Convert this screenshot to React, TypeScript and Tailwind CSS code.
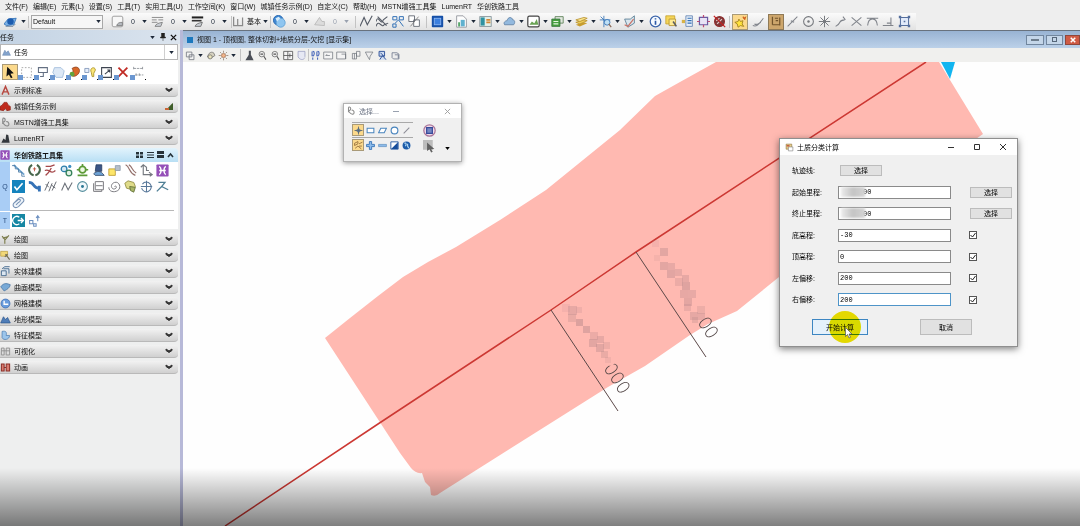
import React from "react";

const B = "#2f6fb5";
const D = "#555b66";

/* Every glyph is drawn on a 16 × 16 grid. */
const glyphs: Record<string, React.ReactNode> = {
  globe: (
    <>
      <path d="M0 11 5 5l10-1-3 8-9 1z" fill="#79b0e6" stroke={B} />
      <circle cx="8" cy="8" r="4" fill="#1d5cae" />
      <path d="M2 14h9l3-3" stroke="#6b7f94" fill="none" />
    </>
  ),
  sheet: (
    <>
      <rect x="1.5" y="1.5" width="13" height="13" rx="2" fill="#f7f7f7" stroke="#8c8c8c" />
      <path d="M7 13c1-3 3-4 7-4v4z" fill="#b5bac0" stroke="#777" />
    </>
  ),
  lines: (
    <>
      <path d="M1 3h14M1 6h6M9 6h6M1 9h7" stroke="#777" fill="none" />
      <path d="M5 14c1-3 4-4 9-5l-2 5z" fill="#c9ced4" stroke="#777" />
    </>
  ),
  weights: (
    <>
      <path d="M1 3h14" stroke="#222" strokeWidth="2.5" />
      <path d="M1 7h12" stroke="#333" strokeWidth="2" />
      <path d="M5 14c1-3 4-4 9-5l-2 5z" fill="#c9ced4" stroke="#666" />
    </>
  ),
  level: <path d="M2 2v11h5M7 5v8h6V3" stroke="#8a8a8a" fill="none" strokeWidth="1.5" />,
  sphere: (
    <>
      <circle cx="6.5" cy="6.5" r="6" fill="#3f87d3" stroke="#1f5fa8" />
      <circle cx="9.5" cy="9.5" r="5.5" fill="#8ec5f0" stroke="#5f9fd2" />
      <path d="m3 4 4-2 2 2-4 4z" fill="#d6ecfb" />
    </>
  ),
  faded: <path d="M2 12 8 3l3 5h3v5z" fill="#dcdcdc" stroke="#b5b5b5" />,
  zigzag: <path d="m0 14 5-11 4 9 6-11" stroke={D} fill="none" strokeWidth="1.4" />,
  waves: <path d="M0 8c3-10 6 7 9-2l5-4M0 14c3-10 7 3 10-2l5-2M2 2l11 11" stroke={D} fill="none" strokeWidth="1.3" />,
  snapgrid: <path d="M1 2h5v4H1zM9 2h5v4H9zM4 10l4-4 6 8M1 11h4v4H1z" stroke={B} fill="none" strokeWidth="1.2" />,
  rotbox: (
    <>
      <path d="M1 1h7v7H1zM7 6h7v8H7z" stroke={D} fill="#fff" />
      <path d="m3 14 10-12" stroke="#777" />
    </>
  ),
  bluebox: (
    <>
      <rect x="1" y="1" width="14" height="14" rx="1" fill="#1650a8" />
      <rect x="4" y="4" width="8" height="8" fill="#3b7fdf" stroke="#8fb9f5" />
    </>
  ),
  page: (
    <>
      <path d="M2 1h8l4 4v10H2z" fill="#fdfdfd" stroke="#8a8f96" />
      <path d="M7 6h5v8H7z" fill="#5fb1cf" />
      <path d="M5 9v5" stroke="#3f9a54" strokeWidth="2" />
    </>
  ),
  panel: (
    <>
      <rect x="1" y="2" width="14" height="12" fill="#e4f0e9" stroke="#7d8b93" />
      <path d="M2 3h5v10H2z" fill="#2f92a2" />
      <path d="M9 6h5M9 9h5" stroke="#d68836" strokeWidth="2" />
    </>
  ),
  cloud: <path d="M2 12c-2-3 1-5 3-5 1-5 6-5 7-1 3 0 3 4 1 6z" fill="#93b9de" stroke="#5e7fa3" />,
  photo: (
    <>
      <rect x="1" y="1.500" width="14" height="13" rx="2" fill="#fff" stroke="#444" strokeWidth="1.5" />
      <path d="m3 12 3-4 3 2 3-5 2 7z" fill="#6aa354" />
    </>
  ),
  greens: (
    <>
      <path d="M5 2h10v8H5z" fill="#e2e7df" stroke="#557b50" />
      <path d="M1 5h10v9H1z" fill="#47a03f" stroke="#35713a" />
      <path d="M3 8h6M3 11h6" stroke="#e5f5df" strokeWidth="1.5" />
    </>
  ),
  layers: (
    <>
      <path d="m1 12 10-3 4 1-9 4z" fill="#c99e2d" />
      <path d="m1 9 10-3 4 1-9 4z" fill="#efce58" stroke="#b9912c" />
      <path d="m1 6 10-3 4 1-9 4z" fill="#f9e58e" stroke="#b9912c" />
    </>
  ),
  target: (
    <>
      <path d="M6 1v14M1 6h13M2 2l8 8" stroke={B} />
      <circle cx="10" cy="9" r="3.500" fill="#bfe0f5" stroke={B} />
      <path d="m12 11 3 4" stroke="#8a6a58" strokeWidth="1.5" />
    </>
  ),
  chart: (
    <>
      <path d="M2 5h7l5-4v9l-8 5z" fill="#d9e6ee" stroke="#53788f" />
      <path d="m2 12 4 2 7-9" stroke="#c97468" fill="none" strokeWidth="1.5" />
    </>
  ),
  info: (
    <>
      <circle cx="8" cy="8" r="6.5" fill="#f7fbff" stroke="#3c65ab" strokeWidth="1.5" />
      <path d="M8 7v5M8 4v1.6" stroke="#2b58a6" strokeWidth="2" />
    </>
  ),
  folder: (
    <>
      <path d="M1 1h11v10H1z" fill="#f6d659" stroke="#c5a02e" />
      <path d="M5 5h8v8H5z" fill="#ffeb94" stroke="#b1902f" />
      <path d="m10 8 4 6" stroke="#5e5e5e" strokeWidth="2" />
    </>
  ),
  props: (
    <>
      <path d="M6 1h8v13H6z" fill="#e8f0fa" stroke="#5d7fb0" />
      <path d="M8 4h5M8 7h5M8 10h5" stroke={B} strokeWidth="1.5" />
      <path d="M1 6h4v4H1z" fill="#d9b347" />
    </>
  ),
  clip: (
    <>
      <path d="M3 3h10v9H3z" fill="#e8e3f5" stroke="#6a5ba3" strokeWidth="1.5" />
      <path d="M8 0v3M8 12v3M13 8h3M0 8h3" stroke="#c04a73" strokeWidth="1.5" />
    </>
  ),
  blocked: (
    <>
      <circle cx="8" cy="8" r="6" fill="#7b3b3b" stroke="#8e2c2c" strokeWidth="1.5" />
      <path d="M5 11l6-6M4 7l4-3" stroke="#e4c9c9" strokeWidth="1.5" />
      <path d="m1 1 14 14" stroke="#c52020" strokeWidth="1.500" />
    </>
  ),
  stars: (
    <>
      <path d="m6 5 2 3 3-1-1 4 2 3-4-1-3 2-1-4-3-2 4-1z" fill="#ffe33c" stroke="#9b7a18" />
      <path d="M11 2l1 2 2-1-1 3" stroke="#d0601b" fill="none" strokeWidth="1.5" />
    </>
  ),
  curveA: <path d="M1 13c6 2 8-3 13-9M3 11c4 2 5-1 8-2" stroke="#80848b" fill="none" strokeWidth="1.3" />,
  magnet: <path d="M3 2v10M12 3v10M3 12h9M6 4h4M7 7h3" stroke="#72542c" fill="none" strokeWidth="1.5" />,
  slash: <path d="M2 14 14 2M6 7l4 2" stroke="#80848b" strokeWidth="1.3" />,
  circle: (
    <>
      <circle cx="8" cy="8" r="6" fill="none" stroke="#74777c" strokeWidth="1.3" />
      <circle cx="8" cy="8" r="1.5" fill="#74777c" />
    </>
  ),
  burst: <path d="M8 1v14M1 8h14M3 3l10 10M13 3 3 13" stroke="#74777c" strokeWidth="1.2" />,
  curveB: <path d="M2 14c9-5 2-7 11-8M11 2l3 4" stroke="#80848b" fill="none" strokeWidth="1.3" />,
  cross: <path d="M2 3l12 10M14 3 2 13" stroke="#80848b" strokeWidth="1.3" />,
  tangent: <path d="M1 4h14M2 13c1-11 11-11 12 0" stroke="#80848b" fill="none" strokeWidth="1.3" />,
  perp: <path d="M1 13h13M11 13V3M6 10h5" stroke="#80848b" strokeWidth="1.3" />,
  frame: (
    <>
      <path d="M3 3h10v10H3z" fill="#e1eafa" stroke="#56709e" strokeWidth="1.3" />
      <path d="M1 1h3v3H1zM12 1h3v3h-3zM1 12h3v3H1zM12 12h3v3h-3zM7 7h2v2H7z" fill="#56709e" />
    </>
  ),
  copies: <path d="M2 3h8v7H2zM6 7h7v7H6z" stroke="#747a82" fill="#f2f2f2" strokeWidth="1.2" />,
  camera: (
    <>
      <path d="M2 10c2-6 5-8 9-6l2 4-6 4z" fill="#d6d2c0" stroke="#666" />
      <circle cx="6" cy="10" r="3" fill="#e9e3bb" stroke="#666" />
    </>
  ),
  sun: (
    <>
      <circle cx="8" cy="8" r="3" fill="#f3b58b" stroke="#9c6c4e" />
      <path d="M8 1v3M8 12v3M1 8h3M12 8h3M3 3l2 2M11 11l2 2M13 3l-2 2M5 11l-2 2" stroke="#84705f" />
    </>
  ),
  brush: <path d="M7 1h3v6l4 8H2l5-8z" fill="#4b4f57" />,
  zoomTool: (
    <>
      <circle cx="7" cy="6" r="4" fill="#eee" stroke="#777" strokeWidth="1.3" />
      <path d="m10 9 3 5M5 6h4" stroke="#555" strokeWidth="1.5" />
    </>
  ),
  fit: <path d="M1 2h13v12H1zM7 2v12M1 8h13M10 5v6" stroke="#555" fill="#f5f5f5" strokeWidth="1.2" />,
  rotate: <path d="M3 2h10v8M3 2v8c3 5 8 5 10 1" stroke="#9398bd" fill="#e6e8f4" />,
  walk: <path d="M4 2c3 0 3 5 0 7M4 11v3M11 2c3 0 3 5 0 7M11 11v3M3 2v7M10 2v7" stroke="#4968bb" fill="none" strokeWidth="1.6" />,
  viewPrev: <path d="M1 3h13v10H1zM4 8h6M4 8l2-2" stroke="#6b7078" fill="#f4f4f4" />,
  viewNext: <path d="M1 3h13v10H1zM8 6h6v7" stroke="#6b7078" fill="#f4f4f4" />,
  gridBox: <path d="M2 5h6v8H2zM8 2h5v7H8zM5 5v8" stroke="#6b7078" fill="#f1f1f1" />,
  funnel: <path d="M2 3h11l-4 6-1 5-3-5z" stroke="#6b7078" fill="#eee" />,
  figure: <path d="M3 2h8v7H3zM4 14l4-6 5 6M5 4l5 5" stroke="#31549b" fill="#cfdcf0" strokeWidth="1.4" />,
  cube: <path d="M3 4h7l3 2v7H5l-2-2zM7 7h5v5" stroke="#59637b" fill="#ededed" />,
  arrow: <path d="m4 1 8 8-4 .5 2.500 4.500-2 1-2.500-4.500L3 13z" fill="#111" />,
  marquee: <path d="M2 2h12v12H2z" stroke="#999" strokeDasharray="2 2" fill="#fff" />,
  place: <path d="M3 2h11v6H3zM9 8v5H5" stroke="#647083" fill="#fff" strokeWidth="1.3" />,
  hexes: <path d="M3 2h8l4 4-2 8H5L1 8z" fill="#dce8f6" stroke="#9db9da" />,
  palette: (
    <>
      <path d="M5 3c6-4 10 0 9 4s-6 7-9 5 4-4 0-9" fill="#d8692a" stroke="#8e4420" />
      <circle cx="5" cy="10" r="3" fill="#62a33c" />
    </>
  ),
  bulb: (
    <>
      <path d="M1 3h5v5H1z" stroke="#7b91b5" fill="#e6eefb" />
      <path d="M9 8C6 2 14 0 14 5l-2 4v4h-2z" stroke="#a58d25" fill="#fbe778" />
    </>
  ),
  scale: <path d="M2 2h12v12H2zM6 10l6-5M9 5h3v3" stroke="#3d4450" fill="#fff" strokeWidth="1.3" />,
  remove: <path d="m3 2 11 11M14 2 3 13" stroke="#c12c25" strokeWidth="2.200" />,
  measure: <path d="M2 3h11M2 1v4M13 1v4M4 11h10M5 9v4M9 9v4" stroke="#878c92" strokeDasharray="3 1" />,
  letterA: <path d="M3 14 8 2l5 12M5 10h6" stroke="#b7473f" fill="none" strokeWidth="2" />,
  city: <path d="M0 13V8l3-2 3-4h4l2 4 3 2v5l-5 1-2-3-3 3z" fill="#bf2a1c" stroke="#8f2114" />,
  link: <path d="M4 2c5-2 4 6 1 5S7 14 11 13s1-8-2-6M4 2v8" stroke="#8b8b8b" fill="none" strokeWidth="1.7" />,
  lumen: <path d="M2 14h12L12 3l-3-1-1 8-3-2z" fill="#33373c" />,
  railway: (
    <>
      <rect x="0.500" y="0.500" width="15" height="15" rx="1" fill="#9550b8" />
      <path d="M4 3c3 2 3 8 0 10M12 3c-3 2-3 8 0 10M4 8h8" stroke="#fff" strokeWidth="1.8" />
    </>
  ),
  steps: (
    <>
      <path d="m2 1 13 12" stroke="#6fa4cf" strokeWidth="2" />
      <path d="M0 2h4v4h4v4h4v5h4" stroke="#4777a3" fill="none" />
    </>
  ),
  laurel: (
    <>
      <path d="M5 1C-1 5 1 12 7 14M11 1c6 4 4 11-2 13" stroke="#48664c" fill="none" strokeWidth="2.500" />
      <path d="M8 4v5M6 6h4" stroke="#bd4a37" />
    </>
  ),
  redcurve: <path d="M2 3h6l5-2M1 8c6-3 7 6 13 0M2 14c3-2 5-5 7-9" stroke="#a5484a" fill="none" strokeWidth="1.6" />,
  gears: (
    <>
      <circle cx="5" cy="6" r="3.500" fill="#d4e9f3" stroke="#2d7eab" strokeWidth="1.6" />
      <circle cx="11" cy="11" r="3.500" fill="#e3f2e6" stroke="#34815a" strokeWidth="1.6" />
      <circle cx="12" cy="3" r="2" fill="#3d8ec1" />
    </>
  ),
  greenGear: (
    <>
      <circle cx="8" cy="7" r="4" fill="#eef8e5" stroke="#5d9a38" strokeWidth="2.200" />
      <path d="M8 0v3M1 7h3M12 7h3M2 14h12" stroke="#5d9a38" strokeWidth="2" />
    </>
  ),
  device: (
    <>
      <path d="M5 1h7v8H4z" fill="#3b5687" stroke="#273d60" />
      <path d="M2 12c4-4 9-4 13 2H4z" fill="#6ea3d6" stroke="#354a67" />
    </>
  ),
  files: (
    <>
      <path d="M1 6h8v8H1z" fill="#fde66a" stroke="#b9972c" />
      <path d="M9 2h6v6H9z" fill="#b7c0ca" stroke="#8d9aac" />
    </>
  ),
  rails: <path d="M2 1c6 3 3 9 12 13M6 1c5 3 3 7 9 10" stroke="#94716c" fill="none" strokeWidth="1.4" />,
  branch: <path d="M4 1v12h10M1 4l3-3 4 3v4h3M11 10l4 3-3 2" stroke="#75797f" fill="none" strokeWidth="1.4" />,
  check: (
    <>
      <path d="M0 0h16v16H0z" fill="#1583bd" />
      <path d="m3 8 3 4 7-8" stroke="#fff" strokeWidth="2" fill="none" />
    </>
  ),
  pipe: <path d="M1 3c8 0 4 7 13 7M14 7v7" stroke="#3572b6" strokeWidth="3.500" fill="none" />,
  slashes: <path d="M1 13 6 2M6 14l4-10M10 13l5-11M2 5l4 4M9 6l5 4" stroke="#565b64" strokeWidth="1.1" />,
  nshape: <path d="m2 13 4-9 4 8 5-9" stroke="#6b7078" fill="none" strokeWidth="1.3" />,
  dotcircle: (
    <>
      <circle cx="8" cy="8" r="6" fill="#f1f8fc" stroke="#568f9e" strokeWidth="1.3" />
      <circle cx="8" cy="8" r="1.800" fill="#2b7794" />
    </>
  ),
  boxes: <path d="M4 2h10v10H4zM2 4v10h10v-2M5 7h8" stroke="#77777c" fill="none" strokeWidth="1.2" />,
  spiral: <path d="M8 8c2-2 4 2 0 3S2 5 8 3s9 7 4 10-11 1-11-4" stroke="#77777c" fill="none" strokeWidth="1.2" />,
  yellowTool: (
    <>
      <path d="M1 4l4-3 7 2 2 5-4 4-7-2z" fill="#e0dc8a" stroke="#8c873d" />
      <path d="M7 8l7 1-2 6-4-2z" fill="#a9b567" stroke="#5c6b31" />
    </>
  ),
  compass: <path d="M8 1v14M1 8h14M3 5a6 6 0 1 1-1 5" stroke="#58789a" fill="none" strokeWidth="1.3" />,
  nodes: <path d="M3 3h8L7 8l8 4M1 14l6-6" stroke="#4f7f95" fill="none" strokeWidth="1.6" />,
  clippy: <path d="M2 9 8 3c4-3 8 1 6 4l-6 6c-4 3-8 0-6-4l6-5c4 0 2 3 0 4l-3 3" stroke="#7993b5" fill="#eef4fa" strokeWidth="1.3" />,
  exportIcon: (
    <>
      <path d="M0 0h16v16H0z" fill="#1687a3" />
      <path d="M9 4a5 5 0 1 0 0 8M7 8h7M11 5l3 3-3 3" stroke="#fff" strokeWidth="1.6" fill="none" />
    </>
  ),
  flow: <path d="M2 8h4v4H2zM7 12h3v3H7zM12 9V3M10 5l2-3 2 3" stroke="#6b8fc0" fill="none" strokeWidth="1.3" />,
  draft: <path d="m3 3 4 5v6M13 2 7 9M4 6l7-2" stroke="#7a7b49" fill="none" strokeWidth="1.6" />,
  drafty: (
    <>
      <path d="M1 2h10v7H1z" fill="#f2d878" stroke="#b99b39" />
      <path d="m8 6 6 8M7 10l4-4" stroke="#6d6a54" strokeWidth="1.6" />
    </>
  ),
  solid: <path d="M2 7h7v7H2zM5 4h8v7M3 4l4-3h7" stroke="#41668b" fill="#dce7f1" strokeWidth="1.3" />,
  surface: <path d="M1 7c4-5 7-6 14-3-1 5-5 7-9 9z" fill="#78a9d6" stroke="#426f9f" />,
  mesh: (
    <>
      <circle cx="8" cy="8" r="6.500" fill="#6b9ddd" stroke="#3566ad" />
      <path d="M6 4v5h6" stroke="#fff" strokeWidth="2" fill="none" />
    </>
  ),
  terrain: <path d="m1 13 4-9 3 4 3-3 4 8z" fill="#4f7db8" stroke="#2c568d" />,
  feature: <path d="M3 2c6-1 7 1 6 6h5c0 6-9 8-11 3z" fill="#9cc5eb" stroke="#4478af" />,
  film: <path d="M2 3h4v10H2zM9 3h5v10H9zM2 7h12" stroke="#8f8f8f" fill="#ddd" strokeWidth="1.3" />,
  anim: <path d="M2 3h4v10H2zM9 3h5v10H9zM6 8h3" stroke="#8d3029" fill="#d97c70" strokeWidth="1.5" />,
  form: (
    <>
      <path d="M2 2h10v9H2z" fill="#e6cf8b" stroke="#8a6b33" />
      <path d="M6 7h8v7H6z" fill="#fff" stroke="#777" />
      <path d="M3 5h5" stroke="#bb3d2e" strokeWidth="2" />
    </>
  ),
  rect: <path d="M2 4h12v8H2z" stroke="#4884bd" fill="#fff" strokeWidth="1.8" />,
  skew: <path d="M5 4h10l-4 8H1z" stroke="#4884bd" fill="#fff" strokeWidth="1.8" />,
  ring: <circle cx="8" cy="8" r="6" stroke="#4884bd" fill="#fff" strokeWidth="2" />,
  diag: <path d="M3 13 13 3" stroke="#8b8b95" strokeWidth="1.8" />,
  diamond: <path d="M8 1v14M1 8h14M8 4l4 4-4 4-4-4z" stroke="#567" fill="#7eaacd" strokeWidth="1.5" />,
  plus: <path d="M6 1h4v5h5v4h-5v5H6v-5H1V6h5z" fill="#8dbbea" stroke={B} strokeWidth="1.5" />,
  minus: <path d="M1 6h14v4H1z" fill="#8dbbea" stroke="#4d82b5" />,
  half: (
    <>
      <path d="M1.500 1.500h13v13h-13z" fill="#fff" stroke="#174d9b" strokeWidth="1.5" />
      <path d="M14 2v12H2z" fill="#174d9b" />
    </>
  ),
  world: (
    <>
      <circle cx="8" cy="8" r="7" fill="#1d5ca9" />
      <path d="M4 4c4-2 4 3 2 5M10 5v4l2 4" stroke="#b7ddf6" strokeWidth="2" fill="none" />
    </>
  ),
  hatch: <path d="M1 4l6-3v4L1 8zM9 5l6-3M2 13l5-4 6 5M9 9h5" stroke="#8b6432" fill="none" strokeWidth="1.4" />,
  ringbox: (
    <>
      <circle cx="8" cy="8" r="7" fill="#f1dcea" stroke="#aa769a" strokeWidth="1.5" />
      <path d="M4.500 4.500h7v7h-7z" fill="#7688c2" stroke="#354a9a" strokeWidth="1.5" />
    </>
  ),
  greyArrow: (
    <>
      <path d="M0 0h12v12H0z" fill="#bcbcbc" />
      <path d="m5 3 9 8-4 .5 2 3-2 1-2-4-3 2z" fill="#616161" />
    </>
  ),
};

function Glyph({ name, className = "size-[13px]" }: { name: string; className?: string }) {
  return (
    <svg viewBox="0 0 16 16" className={`shrink-0 ${className}`} fill="none" aria-hidden="true">
      {glyphs[name]}
    </svg>
  );
}

function Caret({ className = "text-gray-800" }: { className?: string }) {
  return (
    <svg viewBox="0 0 6 4" className={`h-[3px] w-[5px] shrink-0 ${className}`} aria-hidden="true">
      <path d="M0 0h6L3 4z" fill="currentColor" />
    </svg>
  );
}

function Tool({ name, active, className = "h-4 w-4" }: { name: string; active?: boolean; className?: string }) {
  return (
    <button
      type="button"
      aria-label={name}
      className={`flex shrink-0 items-center justify-center ${className} ${
        active ? "border border-[#a99a78] bg-[#fbd98c]" : ""
      }`}
    >
      <Glyph name={name} />
    </button>
  );
}

function DropTool({ name }: { name: string }) {
  return (
    <button type="button" aria-label={name} className="flex h-4 w-6 shrink-0 items-center justify-between">
      <Glyph name={name} />
      <Caret />
      <span className="w-px" />
    </button>
  );
}

function Counter({ name, muted }: { name: string; muted?: boolean }) {
  return (
    <button
      type="button"
      aria-label={name}
      className={`flex h-4 w-10 shrink-0 items-center gap-[7px] ${muted ? "text-gray-400" : "text-gray-800"}`}
    >
      <Glyph name={name} />
      <span className="w-1">0</span>
      <Caret className={muted ? "text-gray-400" : "text-gray-800"} />
    </button>
  );
}

const Divider = ({ className = "mx-[2px]" }: { className?: string }) => (
  <span className={`h-3 w-px shrink-0 bg-[#c3c3c3] ${className}`} />
);

const menus = [
  "文件(F)", "编辑(E)", "元素(L)", "设置(S)", "工具(T)", "实用工具(U)", "工作空间(K)", "窗口(W)",
  "城镇任务示例(D)", "自定义(C)", "帮助(H)", "MSTN增强工具集", "LumenRT", "华创铁路工具",
];

const attributeTools = ["bluebox", "page", "panel", "cloud", "photo", "greens", "layers", "target", "chart"];
const snapTools = ["slash", "circle", "burst", "curveB", "cross", "tangent", "perp", "frame"];

function TopBars() {
  return (
    <header className="bg-[#eeeeee]">
      <nav className="flex h-[13px] items-center gap-[5px] pl-[5px] whitespace-nowrap">
        {menus.map((m) => (
          <button key={m} type="button">{m}</button>
        ))}
      </nav>
      <div className="flex h-[17px] w-max items-center bg-linear-to-b from-[#fbfbfb] to-[#e2e2e2] pr-1">
        <span className="w-[2px]" />
        <Tool name="globe" />
        <span className="ml-[3px]"><Caret /></span>
        <Divider />
        <div className="relative flex items-center">
          <select
            aria-label="图层"
            className="h-3.5 w-[72px] appearance-none border border-[#a8a8a8] bg-[#f6f6f6] pl-px"
          >
            <option>Default</option>
          </select>
          <span className="pointer-events-none absolute right-[2px]"><Caret /></span>
        </div>
        <span className="w-2" />
        <Counter name="sheet" />
        <Counter name="lines" />
        <Counter name="weights" />
        <Divider className="ml-0" />
        <button type="button" className="flex w-9 items-center gap-[2px]">
          <Glyph name="level" />
          <span className="w-3.5 whitespace-nowrap">基本</span>
          <Caret />
        </button>
        <Divider />
        <Counter name="sphere" />
        <Counter name="faded" muted />
        <Divider />
        {["zigzag", "waves", "snapgrid", "rotbox"].map((n) => (
          <Tool key={n} name={n} />
        ))}
        <Divider className="mx-1" />
        {attributeTools.map((n) => (
          <DropTool key={n} name={n} />
        ))}
        {["info", "folder", "props", "clip", "blocked"].map((n) => (
          <Tool key={n} name={n} />
        ))}
        <Divider />
        <Tool name="stars" active />
        <Tool name="curveA" className="h-4 w-5" />
        <button
          type="button"
          aria-label="magnet"
          className="flex size-4 items-center justify-center border border-[#8f7a58] bg-[#cda66c]"
        >
          <Glyph name="magnet" />
        </button>
        {snapTools.map((n) => (
          <Tool key={n} name={n} />
        ))}
      </div>
    </header>
  );
}

const quickTools = ["marquee", "place", "hexes", "palette", "bulb", "scale", "remove", "measure"];

const upperSections = [
  { icon: "letterA", label: "示例标准" },
  { icon: "city", label: "城镇任务示例" },
  { icon: "link", label: "MSTN增强工具集" },
  { icon: "lumen", label: "LumenRT" },
];

const lowerSections = [
  { icon: "draft", label: "绘图" },
  { icon: "drafty", label: "绘图" },
  { icon: "solid", label: "实体建模" },
  { icon: "surface", label: "曲面模型" },
  { icon: "mesh", label: "网格建模" },
  { icon: "terrain", label: "地形模型" },
  { icon: "feature", label: "特征模型" },
  { icon: "film", label: "可视化" },
  { icon: "anim", label: "动画" },
];

const railwayTools = [
  "steps", "laurel", "redcurve", "gears", "greenGear", "device", "files", "rails", "branch", "railway",
  "check", "pipe", "slashes", "nshape", "dotcircle", "boxes", "spiral", "yellowTool", "compass", "nodes",
  "clippy",
];

function Section({ icon, label }: { icon: string; label: string }) {
  return (
    <button
      type="button"
      className="mb-[3px] flex h-[13px] w-full items-center rounded-r-sm border-b border-[#b9b9b9] bg-linear-to-b from-[#f2f2f2] to-[#d0d0d0]"
    >
      <Glyph name={icon} className="size-[11px]" />
      <span className="ml-[3px]">{label}</span>
      {icon === "city" ? (
        <svg viewBox="0 0 9 7" className="mr-1 ml-auto h-[7px] w-[9px]" aria-hidden="true">
          <path d="M0 7c3-1 4-4 8-7v7z" fill="#3e5d29" />
          <path d="M0 5h4v2H0z" fill="#c86435" />
        </svg>
      ) : (
        <svg viewBox="0 0 8 6" className="mr-[5px] ml-auto h-1.5 w-2" aria-hidden="true">
          <path d="m1 1 3 2 3-2v1.500l-3 2-3-2z" fill="#333" stroke="#333" />
        </svg>
      )}
    </button>
  );
}

function TaskPanel() {
  return (
    <aside className="w-[180px] shrink-0 bg-[#eeefef]">
      <div className="flex h-[14px] items-center bg-linear-to-r from-[#c3d3e4] to-[#dbe4ee]">
        <span>任务</span>
        <span className="mr-[5px] ml-auto"><Caret /></span>
        <svg viewBox="0 0 6 8" className="mr-1 h-2 w-1.5" aria-hidden="true">
          <path d="M1.500 0h3v4h1v1h-5V4h1zM3 5v3" fill="#222" stroke="#222" strokeWidth=".5" />
        </svg>
        <svg viewBox="0 0 8 8" className="mr-[3px] size-[7px]" aria-hidden="true">
          <path d="m1 1 6 6M7 1 1 7" stroke="#111" strokeWidth="1.500" />
        </svg>
      </div>
      <div className="mr-[2px] flex h-4 items-center border border-[#b6b6b6] bg-white">
        <Glyph name="terrain" className="ml-px size-[9px] opacity-70" />
        <select aria-label="任务" className="ml-[3px] flex-1 appearance-none bg-white">
          <option>任务</option>
        </select>
        <span className="flex h-full w-[13px] items-center justify-center border-l border-[#cfcfcf]">
          <Caret />
        </span>
      </div>
      <div className="mr-[2px] flex h-6 items-center bg-white pl-[2px]">
        <Tool name="arrow" active />
        {quickTools.map((n, i) => (
          <button key={n} type="button" aria-label={n} className="relative flex size-4 items-center justify-center">
            <Glyph name={n} />
            <span className="absolute bottom-0 left-0 size-[5px] bg-[#6b97d1]" />
            {i !== 6 && <span className="absolute right-0 bottom-0 size-px bg-black" />}
          </button>
        ))}
      </div>
      <div className="mr-[2px]">
        {upperSections.map((s) => (
          <Section key={s.label} {...s} />
        ))}
        <div className="flex h-3.5 items-center rounded-tr-sm bg-linear-to-b from-[#e2f3fc] to-[#b8dff4]">
          <Glyph name="railway" className="size-[10px]" />
          <span className="ml-1 font-bold">华创铁路工具集</span>
          <svg viewBox="0 0 38 8" className="mr-1 ml-auto h-2 w-[38px]" aria-hidden="true">
            <path
              d="M0 1h3v2.500H0zM4 1h3v2.500H4zM0 4.500h3V7H0zM4 4.500h3V7H4zM11 1h7v1h-7zM11 3.500h7v1h-7zM11 6h7v1h-7zM21 0h7v3h-7zM21 4h7v3h-7z"
              fill="#263238"
            />
            <path d="m32 6 2.500-3L37 6" fill="none" stroke="#263238" strokeWidth="1.600" />
          </svg>
        </div>
        <div className="flex bg-white">
          <span className="flex w-[10px] items-center justify-center bg-[#a9cdf5] text-[#2b4f80]">Q</span>
          <div className="mr-1 flex-1 border-b border-[#b8b8b8] pr-1">
            <div className="grid grid-cols-10">
              {railwayTools.map((n) => (
                <Tool key={n} name={n} />
              ))}
            </div>
          </div>
        </div>
        <div className="mb-1 flex bg-white">
          <span className="mt-px flex w-[10px] items-center justify-center bg-[#a9cdf5] text-[#2b4f80]">T</span>
          <div className="flex h-[18px] items-center">
            <Tool name="exportIcon" />
            <Tool name="flow" />
          </div>
        </div>
        {lowerSections.map((s) => (
          <Section key={s.icon} {...s} />
        ))}
      </div>
    </aside>
  );
}

/* Each entry: x, y, size, opacity. */
const mosaic: [number, number, number, number][] = [
  [562, 304, 8, 0.14], [568, 306, 9, 0.35], [576, 307, 6, 0.22], [568, 314, 8, 0.3], [576, 319, 7, 0.5],
  [583, 326, 7, 0.45], [590, 332, 8, 0.28], [589, 339, 8, 0.4], [597, 336, 7, 0.35], [596, 344, 8, 0.4],
  [603, 342, 7, 0.24], [601, 351, 7, 0.3], [605, 357, 6, 0.18], [652, 240, 7, 0.14], [660, 248, 8, 0.4],
  [654, 255, 6, 0.15], [660, 262, 8, 0.4], [668, 263, 7, 0.32], [667, 270, 8, 0.42], [675, 269, 7, 0.32],
  [675, 278, 8, 0.28], [682, 275, 7, 0.35], [682, 282, 8, 0.45], [688, 290, 8, 0.32], [680, 290, 8, 0.35],
  [684, 298, 8, 0.38], [684, 304, 7, 0.28], [690, 312, 8, 0.36], [697, 306, 8, 0.25], [698, 313, 7, 0.32],
  [692, 317, 6, 0.3],
];

function Drawing() {
  return (
    <svg
      viewBox="183 62 897 464"
      preserveAspectRatio="xMinYMin slice"
      className="block min-h-0 w-full flex-1 bg-[#fefefe]"
      role="img"
      aria-label="顶视图"
    >
      <path
        d="M325 338 350 318 378 296 403 277 428 262 456 247 500 220 546 190 583 160 620 130 655 96 680 82 716 62H939L983 134 779 277 737 311 708 324 690 335 645 366 608 387 440 493Q436 497 431 495L430 487 425 482 422 473Q416 474 411 468L400 453z"
        fill="#ffb9b1"
      />
      <path d="M941 62h14l-5 17z" fill="#12b5f0" />
      <path d="M926 62 636 252 551 310 378 424 225 526" stroke="#cc3833" strokeWidth="1.5" fill="none" />
      <path d="M551 310 618 411M636 252 706 357" stroke="#5b4848" strokeWidth="1" />
      <g className="font-['Inter',sans-serif]" fill="#4e4242" fontSize="18" fontWeight="200">
        <text transform="translate(603 368) rotate(57)">000</text>
        <text transform="translate(697 322) rotate(57)">00</text>
      </g>
      <path d="m603 365 2-7 12 3-5 5z" fill="#ffb9b1" />
      <g fill="#b98a8c">
        {mosaic.map(([x, y, s, o]) => (
          <rect key={`${x}-${y}`} x={x} y={y} width={s} height={s} opacity={o} />
        ))}
      </g>
    </svg>
  );
}

function ViewWindow() {
  return (
    <main className="flex min-w-0 flex-1 flex-col">
      <div className="flex h-[18px] items-center border-t border-[#68727e] bg-linear-to-b from-[#98b3d3] to-[#bcd1e9] pl-1">
        <span className="flex size-1.5 items-center justify-center bg-[#1c78bd]" />
        <h1 className="ml-1 whitespace-nowrap">视图 1 - 顶视图, 整体切割+地质分层-欠挖 [显示集]</h1>
        <div className="ml-auto flex h-2.5 gap-[2px]">
          <button type="button" aria-label="最小化" className="flex w-[18px] items-center justify-center border border-[#71869e] bg-[#c4d6e9]">
            <span className="h-[2px] w-2 border border-[#6d7d8d]" />
          </button>
          <button type="button" aria-label="还原" className="flex w-[17px] items-center justify-center border border-[#71869e] bg-[#c4d6e9]">
            <span className="size-[5px] border border-[#56677a]" />
          </button>
          <button type="button" aria-label="关闭" className="flex w-[15px] items-center justify-center border border-[#8f473c] bg-[#cf5b45]">
            <svg viewBox="0 0 8 8" className="size-1.5" aria-hidden="true">
              <path d="m1 1 6 6M7 1 1 7" stroke="#fff" strokeWidth="2" />
            </svg>
          </button>
        </div>
      </div>
      <div className="flex h-[14px] items-center bg-[#f0f0ee] pl-px [&_button_svg]:size-[11px]">
        <Tool name="copies" className="h-3 w-3" />
        <span className="mx-[2px]"><Caret /></span>
        <Tool name="camera" className="h-3 w-3" />
        <Tool name="sun" className="h-3 w-3" />
        <span className="mx-[2px]"><Caret /></span>
        <Divider />
        {["brush", "zoomTool", "zoomTool", "fit", "rotate"].map((n, i) => (
          <Tool key={i} name={n} className="h-3 w-[13px]" />
        ))}
        <Divider className="mx-0" />
        {["walk", "viewPrev", "viewNext"].map((n) => (
          <Tool key={n} name={n} className="h-3 w-[13px]" />
        ))}
        <span className="w-[2px]" />
        {["gridBox", "funnel", "figure", "cube"].map((n) => (
          <Tool key={n} name={n} className="h-3 w-[13px]" />
        ))}
      </div>
      <Drawing />
    </main>
  );
}

function SelectionPalette() {
  return (
    <section className="absolute top-[103px] left-[343px] w-[119px] border border-[#b2b2b2] bg-[#f0f0f0] pb-[7px] shadow-[0_1px_5px_rgba(0,0,0,0.4)]">
      <div className="flex h-3.5 items-center bg-white pl-[2px] text-gray-500">
        <Glyph name="link" className="size-2.5" />
        <span className="ml-[3px]">选择...</span>
        <span className="ml-3.5 h-px w-1.5 bg-gray-400" />
        <svg viewBox="0 0 8 8" className="mr-2.5 ml-auto size-[7px]" aria-hidden="true">
          <path d="m1 1 6 6M7 1 1 7" stroke="#999" />
        </svg>
      </div>
      <div className="flex items-start pt-1 pl-2">
        <div className="w-[61px] [&_svg]:size-[9px]">
          <div className="flex h-[15px] items-center border-t border-[#a9a9a9]">
            <Tool name="diamond" active className="size-3" />
            {["rect", "skew", "ring", "diag"].map((n) => (
              <Tool key={n} name={n} className="size-3" />
            ))}
          </div>
          <div className="flex h-[15px] items-center border-t border-[#a9a9a9]">
            <Tool name="hatch" active className="size-3" />
            {["plus", "minus", "half", "world"].map((n) => (
              <Tool key={n} name={n} className="size-3" />
            ))}
          </div>
        </div>
        <div className="ml-2 flex flex-col">
          <Tool name="ringbox" />
          <Tool name="greyArrow" />
        </div>
        <span className="mb-1 ml-2 self-end"><Caret className="text-black" /></span>
      </div>
    </section>
  );
}

const fields = [
  { id: "start", label: "起始里程:", value: "00", pick: true },
  { id: "end", label: "终止里程:", value: "00", pick: true },
  { id: "bottom", label: "底高程:", value: "-30" },
  { id: "top", label: "顶高程:", value: "0" },
  { id: "left", label: "左偏移:", value: "200" },
  { id: "right", label: "右偏移:", value: "200" },
];

const pickButton = "h-[11px] w-[42px] border border-[#bcbcbc] bg-[#e1e1e1] leading-none";

function SoilDialog() {
  return (
    <section className="absolute top-[138px] left-[779px] w-[239px] border border-[#8f8f8f] bg-[#f0f0f0] text-black shadow-[0_2px_7px_rgba(0,0,0,0.5)]">
      <div className="flex h-4 items-center bg-white pl-[5px]">
        <Glyph name="form" className="size-[9px]" />
        <h2 className="ml-[3px]">土质分类计算</h2>
        <svg viewBox="0 0 60 8" className="mr-2.5 ml-auto h-2 w-[60px]" aria-hidden="true">
          <path d="M1 4.500h6M27.500 1.500h5v5h-5zM53 1l6 6M59 1l-6 6" stroke="#333" fill="none" />
        </svg>
      </div>
      <form className="px-[5px] pt-[9px] pb-[11px] pl-3" onSubmit={(e) => e.preventDefault()}>
        <div className="flex h-[142px] flex-col justify-between">
          <div className="flex h-[13px] items-center">
            <span className="w-12">轨迹线:</span>
            <button type="button" className={pickButton}>选择</button>
          </div>
          {fields.map((f) => (
            <div key={f.id} className="flex h-[13px] items-center">
              <label htmlFor={f.id} className="w-[46px]">{f.label}</label>
              <div className="relative w-[113px]">
                <input
                  id={f.id}
                  defaultValue={f.value}
                  className={`block h-[13px] w-full border bg-white font-['Liberation_Mono',monospace] text-[7px] outline-none ${
                    f.pick ? "pl-6" : "pl-px"
                  } ${f.id === "right" ? "border-[#4e94c8]" : "border-[#8a8a8a]"}`}
                />
                {f.pick && (
                  <span className="absolute top-px left-[3px] h-2.5 w-6 bg-linear-to-r from-[#ededed] via-[#c4c4c4] to-[#d4d4d4] blur-[1px]" />
                )}
              </div>
              {f.pick ? (
                <button type="button" className={`ml-auto ${pickButton}`}>选择</button>
              ) : (
                <span className="relative ml-[18px] flex size-2">
                  <input
                    type="checkbox"
                    defaultChecked
                    aria-label={f.label}
                    className="peer size-2 appearance-none border border-[#555] bg-white"
                  />
                  <svg
                    viewBox="0 0 8 8"
                    className="pointer-events-none absolute inset-0 hidden size-2 peer-checked:block"
                    aria-hidden="true"
                  >
                    <path d="m1.500 4 2 2 3-4" fill="none" stroke="#222" />
                  </svg>
                </span>
              )}
            </div>
          ))}
        </div>
        <div className="mt-[13px] flex gap-[52px] pl-5">
          <button type="submit" className="h-4 w-14 border border-[#3d86c2] bg-[#e5f1fb]">开始计算</button>
          <button type="button" className="h-4 w-[52px] border border-[#bcbcbc] bg-[#e1e1e1]">取消</button>
        </div>
      </form>
      <span className="pointer-events-none absolute bottom-[3px] left-[49px] size-8 rounded-full bg-[#f2e600] mix-blend-multiply" />
      <svg viewBox="0 0 8 12" className="pointer-events-none absolute bottom-[7px] left-[65px] h-3 w-2" aria-hidden="true">
        <path d="M.5.5v9l2-2 1.500 3.500 1.500-.7L4 7h3z" fill="#fff" stroke="#555" strokeWidth=".7" />
      </svg>
    </section>
  );
}

export default function App() {
  return (
    <div className="relative flex h-screen flex-col overflow-hidden bg-[#eeefef] font-['Liberation_Sans','Noto_Sans_CJK_SC',sans-serif] text-[7px] leading-none text-[#111]">
      <TopBars />
      <div className="flex min-h-0 flex-1">
        <TaskPanel />
        <div className="w-[3px] shrink-0 bg-[#b7b9d8]" />
        <ViewWindow />
      </div>
      <SelectionPalette />
      <SoilDialog />
      <div className="pointer-events-none absolute inset-x-0 bottom-0 h-[58px] bg-linear-to-b from-transparent to-black/50" />
    </div>
  );
}
